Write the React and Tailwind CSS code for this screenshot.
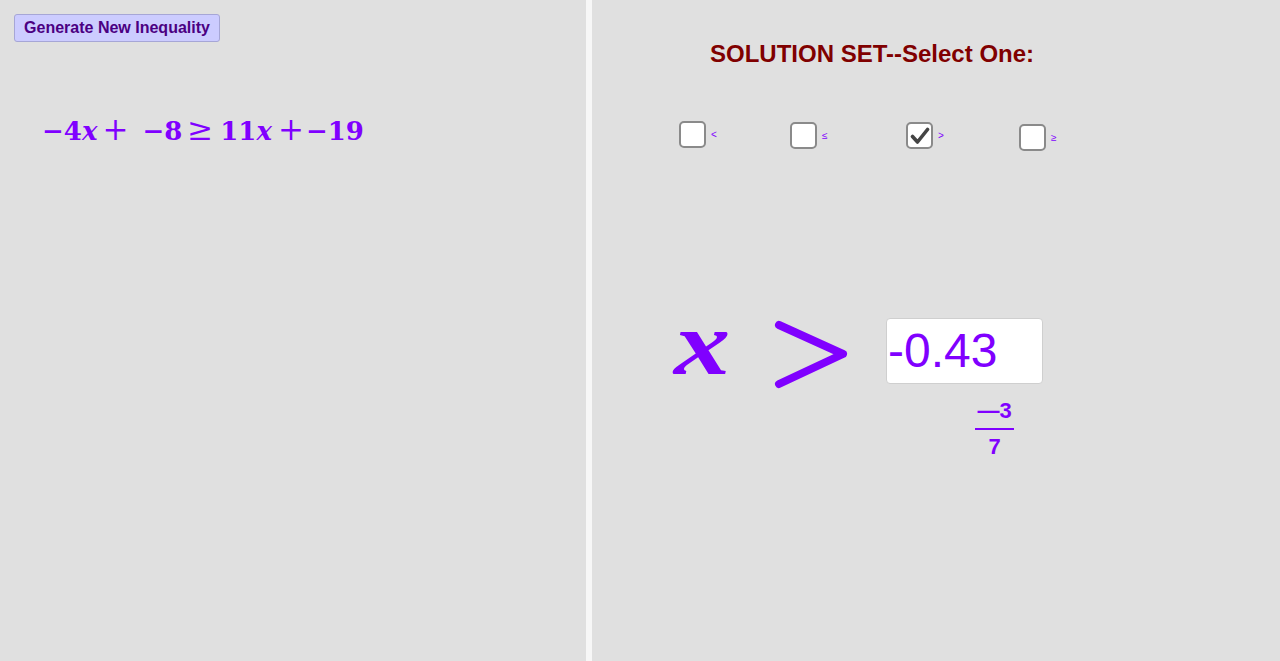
import React, { useState } from 'react';

const PURPLE = '#8000ff';

const options = [
  { key: 'lt', label: '<', w: 'w-[111px]', mt: 'mt-0' },
  { key: 'le', label: '≤', w: 'w-[116px]', mt: 'mt-[1px]' },
  { key: 'gt', label: '>', w: 'w-[113px]', mt: 'mt-[1px]' },
  { key: 'ge', label: '≥', w: 'w-[60px]', mt: 'mt-[3px]' },
];

const CheckOption = ({ opt, checked, onToggle }) => (
  <div className={`flex items-center ${opt.w} ${opt.mt}`}>
    <button
      onClick={onToggle}
      className="w-[27px] h-[27px] bg-white border-2 border-[#8a8a8a] rounded-[5px] flex items-center justify-center p-0"
    >
      {checked && (
        <svg width="20" height="18" viewBox="0 0 20 18">
          <path d="M2.5 9.5 L7.5 15 L17.5 2.5" fill="none" stroke="#444" strokeWidth="3.6" strokeLinecap="round" strokeLinejoin="round" />
        </svg>
      )}
    </button>
    <span className="ml-[5px] text-[10px] leading-none text-[#8000ff] font-['Liberation_Sans',sans-serif]">{opt.label}</span>
  </div>
);

export default function App() {
  const [selected, setSelected] = useState('gt');

  return (
    <div className="flex w-[1280px] h-[661px] bg-[#e0e0e0] overflow-hidden">
      {/* left panel */}
      <div className="w-[586px] h-full flex flex-col items-start pl-[14px] pt-[14px]">
        <button className="h-[28px] w-[206px] bg-[#ccccff] border border-[#a6a6d6] rounded-[3px] text-[16px] font-bold text-[#4b0082] font-['Liberation_Sans',Arial,sans-serif] leading-none">
          Generate New Inequality
        </button>
        <div className="mt-[72px] ml-[28px] flex items-baseline text-[26px] font-bold text-[#8000ff] leading-none whitespace-nowrap font-['DejaVu_Serif',serif]">
          <span>−4<i>x</i></span>
          <span className="ml-[5px] text-[31px] font-normal">+</span>
          <span className="ml-[14px]">−8</span>
          <span className="ml-[5px] text-[31px] font-normal">≥</span>
          <span className="ml-[7px]">11<i>x</i></span>
          <span className="ml-[6px] text-[31px] font-normal">+</span>
          <span className="ml-[2px]">−19</span>
        </div>
      </div>

      {/* divider */}
      <div className="w-[6px] h-full bg-[#f7f7f7]" />

      {/* right panel */}
      <div className="flex-1 h-full flex flex-col">
        <h1 className="mt-[39px] ml-[118px] text-[24px] leading-[30px] font-bold text-[#800000] font-['Liberation_Sans',Arial,sans-serif] whitespace-nowrap">
          SOLUTION SET--Select One:
        </h1>

        <div className="flex items-start mt-[52px] ml-[87px]">
          {options.map((opt) => (
            <CheckOption
              key={opt.key}
              opt={opt}
              checked={selected === opt.key}
              onToggle={() => setSelected(opt.key)}
            />
          ))}
        </div>

        <div className="flex items-start mt-[167px] ml-[82px]">
          <span className="w-[99px] -mt-[19px] text-[90px] leading-none font-bold italic text-[#8000ff] font-['Liberation_Serif',serif]">
            <span className="inline-block scale-x-125 origin-left">x</span>
          </span>
          <svg className="mt-[2px]" width="76" height="70" viewBox="0 0 76 70">
            <polyline points="6,5 70,34 6,64" fill="none" stroke={PURPLE} strokeWidth="8" strokeLinecap="round" strokeLinejoin="round" />
          </svg>
          <div className="ml-[37px] flex flex-col items-center">
            <div className="w-[157px] h-[66px] bg-white border border-[#cfcfcf] rounded-[4px] flex items-center pl-[1px]">
              <span className="text-[48px] leading-none text-[#8000ff] font-['Liberation_Sans',Arial,sans-serif]">-0.43</span>
            </div>
            <div className="ml-[60px] mt-[16px] flex flex-col items-center text-[22px] leading-none font-bold text-[#8000ff] font-['Liberation_Sans',Arial,sans-serif]">
              <span>—3</span>
              <div className="w-[39px] h-[1.5px] bg-[#8000ff] mt-[6px] mb-[6px]" />
              <span>7</span>
            </div>
          </div>
        </div>
      </div>
    </div>
  );
}
